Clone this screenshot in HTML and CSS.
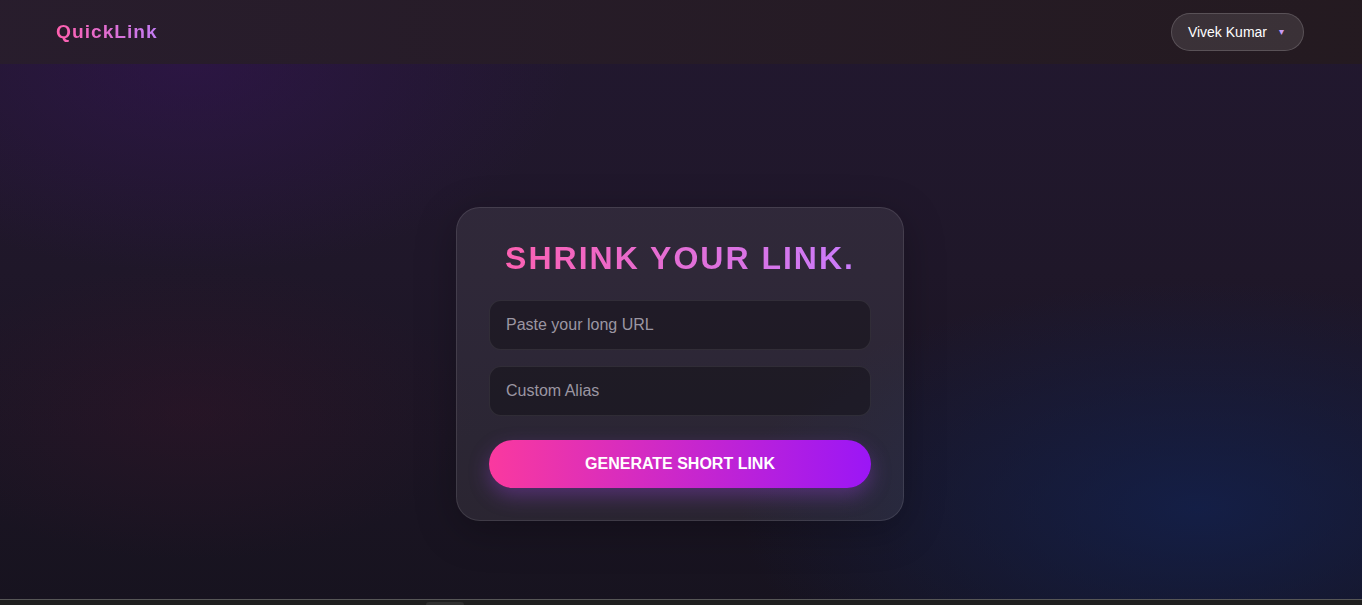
FILE: index.html
```html
<!DOCTYPE html>
<html lang="en">
<head>
  <meta charset="utf-8">
  <meta content="initial-scale=1" name="viewport">
  <title>QuickLink - Shrink your link</title>
  <link rel="stylesheet" href="styles.css">
</head>
<body>
  <header class="topbar">
    <a class="brand" href="#">QuickLink</a>
    <button class="user-menu" type="button">
      <span class="user-name">Vivek Kumar</span>
      <span class="user-caret">&#9662;</span>
    </button>
  </header>
  <main class="main">
    <form class="card" onsubmit="return false;">
      <h2 class="card-title">Shrink your link.</h2>
      <input class="field" type="text" placeholder="Paste your long URL">
      <input class="field" type="text" placeholder="Custom Alias">
      <button class="generate" type="submit">Generate short link</button>
    </form>
  </main>
  <footer class="dock"><span class="dock-tab"></span></footer>
</body>
</html>
```
FILE: styles.css
```css
html, body { height: 100%; margin: 0; }
body {
  background:
    radial-gradient(ellipse 40% 50% at 14% 10%, rgba(52, 20, 84, .55), transparent 70%),
    radial-gradient(ellipse 30% 35% at 14% 68%, rgba(54, 20, 40, .4), transparent 70%),
    radial-gradient(ellipse 45% 50% at 88% 84%, rgba(18, 34, 82, .75), transparent 75%),
    linear-gradient(180deg, #221830 0%, #1f1729 45%, #17131f 100%);
  color: #fff;
  display: flex;
  flex-direction: column;
  font-family: "Liberation Sans", Arial, sans-serif;
  overflow: hidden;
}

.topbar { align-items: center; background: linear-gradient(90deg, rgba(40, 29, 44, .97), rgba(36, 26, 32, .97)); box-sizing: border-box; display: flex; flex-shrink: 0; height: 64px; justify-content: space-between; padding: 0 58px 0 56px; }
.brand { background: linear-gradient(90deg, #ff5fae, #c27cf4); -webkit-background-clip: text; background-clip: text; color: transparent; font-size: 19.2px; font-weight: bold; letter-spacing: 1px; text-decoration: none; }
.user-menu { align-items: center; background: rgba(255, 255, 255, .1); border: 1px solid rgba(255, 255, 255, .16); border-radius: 20px; color: #fff; cursor: pointer; display: flex; font-family: inherit; font-size: 14px; gap: 12px; height: 38px; margin-top: -1px; padding: 0 19px 0 16px; }
.user-caret { color: #c99cf5; font-size: 10px; }

.main { align-items: flex-start; display: flex; flex: 1; justify-content: center; padding: 143px 2px 0 0; }
.card { background: rgba(255, 255, 255, .075); border: 1px solid rgba(255, 255, 255, .1); border-radius: 24px; box-shadow: 0 10px 40px rgba(0, 0, 0, .25); box-sizing: border-box; display: flex; flex-direction: column; padding: 32px; width: 448px; }
.card-title { background: linear-gradient(90deg, #ff5fae, #c77dff); -webkit-background-clip: text; background-clip: text; color: transparent; font-size: 32px; font-weight: bold; letter-spacing: 2px; line-height: 37px; margin: 0 0 23px; text-align: center; text-transform: uppercase; }
.field { background: rgba(0, 0, 0, .3); border: 1px solid rgba(255, 255, 255, .08); border-radius: 12px; box-sizing: border-box; color: #fff; font-family: inherit; font-size: 16px; height: 50px; margin-bottom: 16px; outline: none; padding: 0 16px; }
.field::placeholder { color: #9b96a2; }
.field + .field { margin-bottom: 24px; }
.generate { background: linear-gradient(90deg, #fa399f, #9b16f6); border: none; border-radius: 24px; box-shadow: 0 8px 20px rgba(160, 70, 230, .35); color: #fff; cursor: pointer; font-family: inherit; font-size: 16px; font-weight: bold; height: 48px; text-transform: uppercase; }

.dock { background: #1f1f1f; border-top: 1px solid #565656; flex-shrink: 0; height: 5px; padding-left: 426px; }
.dock-tab { background: #303030; border-radius: 3px 3px 0 0; display: block; height: 3px; margin-top: 2px; width: 38px; }
```
